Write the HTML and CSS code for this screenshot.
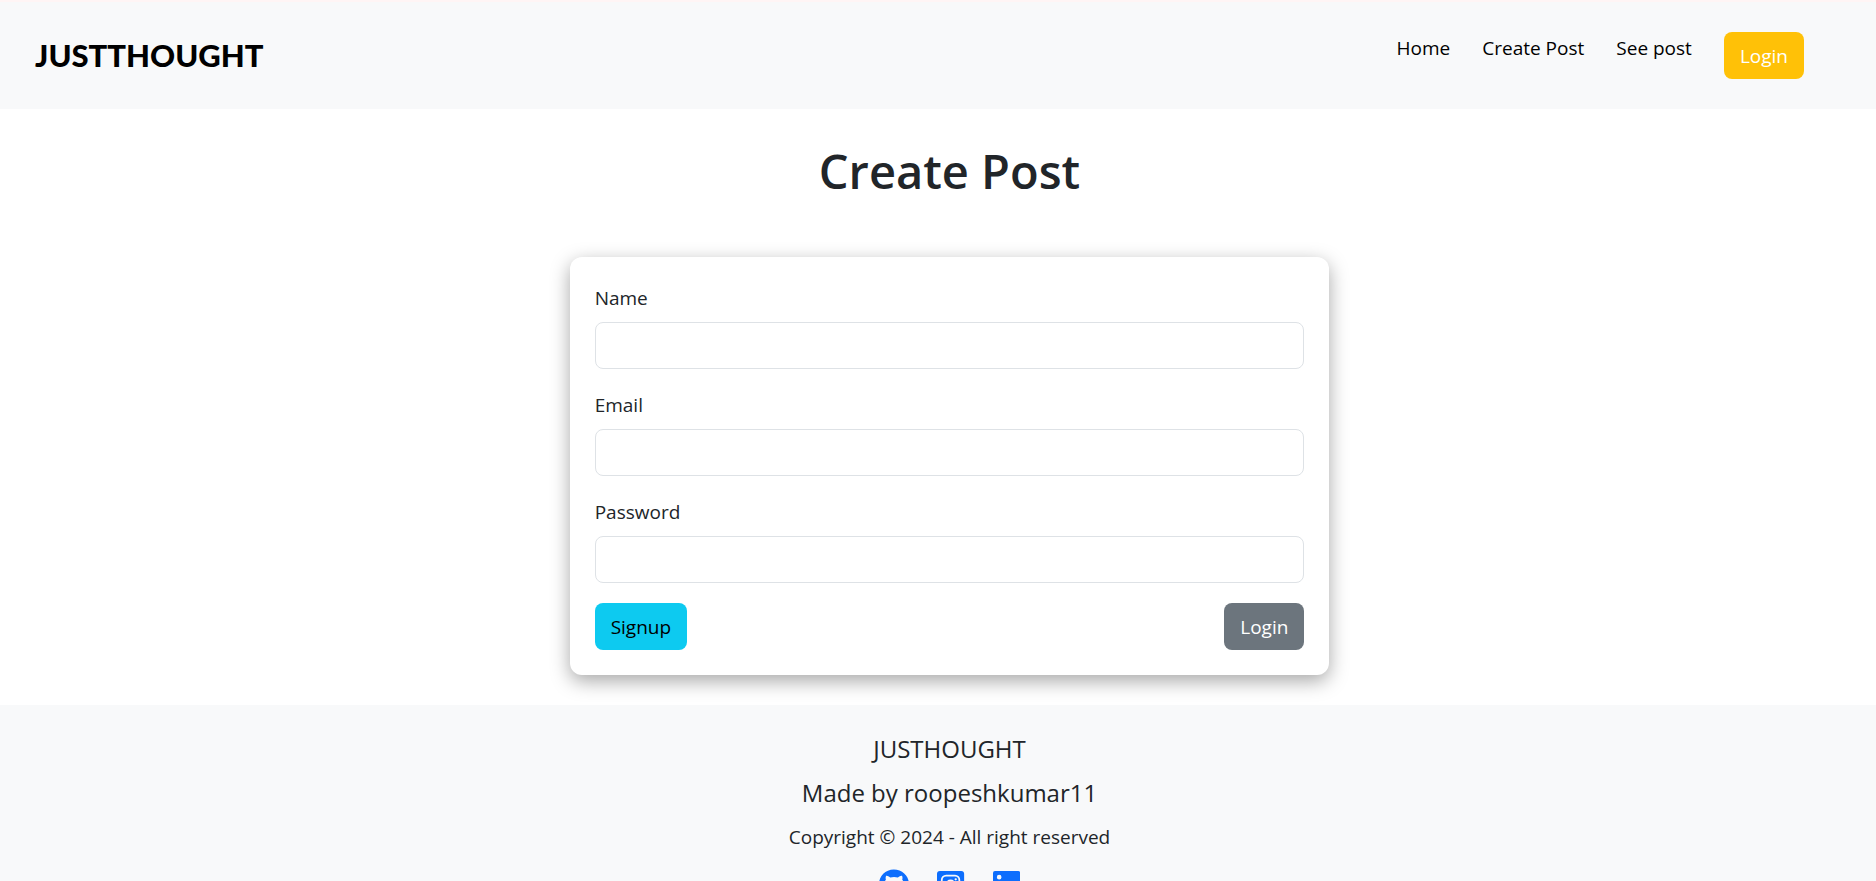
FILE: index.html
```html
<!DOCTYPE html>
<html lang="en">
<head>
<meta charset="utf-8">
<title>JustThought</title>
<link rel="stylesheet" href="styles.css">
</head>
<body>
<header class="navbar">
  <a class="brand" href="#">JUSTTHOUGHT</a>
  <nav>
    <ul class="nav-list">
      <li><a class="nav-link" href="#">Home</a></li>
      <li><a class="nav-link" href="#">Create Post</a></li>
      <li><a class="nav-link" href="#">See post</a></li>
      <li><button class="btn btn-warning" type="button">Login</button></li>
    </ul>
  </nav>
</header>
<main class="content">
  <h1 class="title">Create Post</h1>
  <form class="card">
    <div class="field">
      <label for="name">Name</label>
      <input id="name" type="text">
    </div>
    <div class="field">
      <label for="email">Email</label>
      <input id="email" type="email">
    </div>
    <div class="field">
      <label for="password">Password</label>
      <input id="password" type="password">
    </div>
    <div class="actions">
      <button class="btn btn-info" type="button">Signup</button>
      <button class="btn btn-secondary" type="button">Login</button>
    </div>
  </form>
</main>
<footer class="footer">
  <p class="footer-lead">JUSTHOUGHT</p>
  <p class="footer-lead">Made by roopeshkumar11</p>
  <p class="footer-copy">Copyright © 2024 - All right reserved</p>
  <div class="social">
    <a href="#" aria-label="GitHub"><svg class="icon" viewBox="0 0 496 512"><path d="M244.800 8C106.100 8 0 113.300 0 252c0 110.900 69.800 205.800 169.500 239.200 12.800 2.300 17.300-5.600 17.300-12.100 0-6.200-.3-40.400-.3-61.400 0 0-70 15-84.700-29.800 0 0-11.400-29.100-27.800-36.600 0 0-22.900-15.700 1.600-15.400 0 0 24.900 2 38.600 25.800 21.900 38.600 58.600 27.500 72.900 20.900 2.300-16 8.800-27.100 16-33.700-55.900-6.200-112.300-14.300-112.300-110.500 0-27.500 7.600-41.300 23.600-58.900-2.600-6.500-11.100-33.300 2.600-67.900 20.900-6.500 69 27 69 27 20-5.600 41.500-8.500 62.800-8.500s42.800 2.900 62.800 8.500c0 0 48.100-33.600 69-27 13.700 34.700 5.200 61.400 2.600 67.900 16 17.700 25.800 31.500 25.800 58.900 0 96.500-58.900 104.200-114.800 110.500 9.200 7.900 17 22.900 17 46.400 0 33.700-.3 75.400-.3 83.600 0 6.500 4.600 14.400 17.300 12.100C428.200 457.800 496 362.900 496 252 496 113.300 383.500 8 244.800 8z"/></svg></a>
    <a href="#" aria-label="Instagram"><svg class="icon" viewBox="0 0 448 512"><path fill-rule="evenodd" d="M48 32h352a48 48 0 0 1 48 48v352a48 48 0 0 1-48 48H48a48 48 0 0 1-48-48V80a48 48 0 0 1 48-48zM150 96a86 86 0 0 0-86 86v148a86 86 0 0 0 86 86h148a86 86 0 0 0 86-86V182a86 86 0 0 0-86-86zM152 125h144a59 59 0 0 1 59 59v144a59 59 0 0 1-59 59H152a59 59 0 0 1-59-59V184a59 59 0 0 1 59-59zM224 174a82 82 0 1 0 0 164a82 82 0 1 0 0-164zM224 203a53 53 0 1 1 0 106a53 53 0 1 1 0-106zM309 151a19 19 0 1 0 0 38a19 19 0 1 0 0-38z"/></svg></a>
    <a href="#" aria-label="LinkedIn"><svg class="icon" viewBox="0 0 448 512"><path fill-rule="evenodd" d="M32 32h384a32 32 0 0 1 32 32v384a32 32 0 0 1-32 32H32a32 32 0 0 1-32-32V64a32 32 0 0 1 32-32zM69 202v214h66V202zM102 96a38 38 0 1 0 0 77a38 38 0 1 0 0-77zM177 202v214h66V310c0-28 5-55 40-55 34 0 35 32 35 57v104h66V299c0-58-12-102-80-102-32 0-54 18-63 35h-1v-30z"/></svg></a>
  </div>
</footer>
</body>
</html>
```
FILE: styles.css
```css
* { box-sizing: border-box; }
body {
  margin: 0;
  background: #fff;
  color: #212529;
  font-family: "Segoe UI", "Open Sans", sans-serif;
  font-size: 19px;
  line-height: 32px;
}
.navbar {
  display: flex;
  justify-content: space-between;
  padding: 30px 72px 30px 35px;
  background: #f8f9fa;
  border-top: 2px solid #fff5f5;
}
.brand {
  color: #000;
  font-family: Lato, "Open Sans", sans-serif;
  font-size: 31px;
  font-weight: 900;
  line-height: 46px;
  text-decoration: none;
}
.nav-list {
  display: flex;
  gap: 32px;
  margin: 0;
  padding: 0;
  list-style: none;
}
.nav-link { color: #000; text-decoration: none; }
.btn {
  display: block;
  height: 47px;
  padding: 0 16px;
  border: 0;
  border-radius: 8px;
  font: inherit;
  cursor: pointer;
}
.btn-warning { background: #ffc107; color: #fff; }
.btn-info { background: #0dcaf0; color: #000; }
.btn-secondary { background: #6c757d; color: #fff; }
.content { padding: 32px 0 30px 23px; }
.title {
  margin: 0 0 56px;
  font-size: 47px;
  font-weight: 600;
  line-height: 60px;
  text-align: center;
}
.card {
  width: 41%;
  margin: 0 auto;
  padding: 25px;
  border-radius: 12px;
  background: #fff;
  box-shadow: 0 6px 19px rgba(0, 0, 0, 0.35);
}
.field { margin-bottom: 20px; }
.field label { display: block; margin-bottom: 8px; }
.field input {
  display: block;
  width: 100%;
  height: 47px;
  padding: 8px 15px;
  border: 1px solid #dee2e6;
  border-radius: 8px;
  background: #fff;
  font: inherit;
}
.actions { display: flex; justify-content: space-between; }
.footer {
  padding: 28px 0 30px 23px;
  background: #f8f9fa;
  text-align: center;
}
.footer p { margin: 0; }
.footer .footer-lead { margin-bottom: 12px; font-size: 24px; }
.footer .footer-copy { margin-bottom: 16px; }
.social { display: flex; justify-content: center; gap: 28px; }
.icon { display: block; height: 31px; fill: #0d6efd; }
```
